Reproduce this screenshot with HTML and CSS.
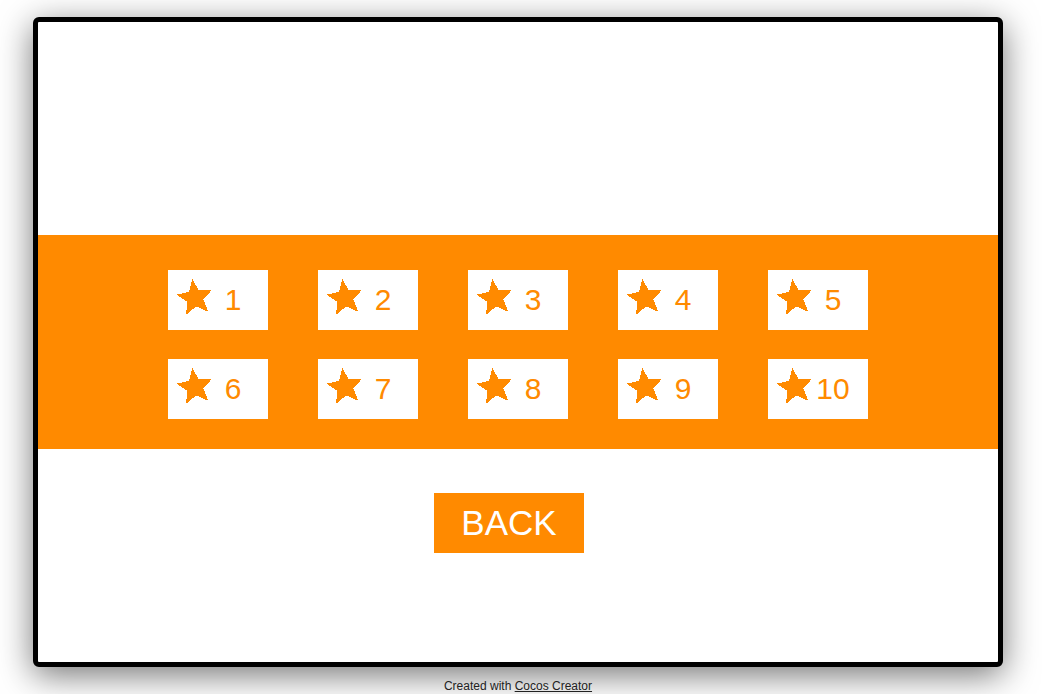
FILE: index.html
```html
<!DOCTYPE html>
<html>
<head>
<meta charset="utf-8">
<link rel="stylesheet" href="styles.css">
</head>
<body>
<svg width="0" height="0" class="defs">
  <defs>
    <polygon id="star" points="0,-19 5,-6.9 18.1,-5.9 8.1,2.6 11.2,15.4 0,8.5 -11.2,15.4 -8.1,2.6 -18.1,-5.9 -5,-6.9"/>
  </defs>
</svg>
<div class="page">
  <div class="frame">
    <div class="top-space"></div>
    <div class="band">
      <div class="grid">
        <div class="level"><svg class="star" viewBox="-19 -19 38 38"><use href="#star" transform="rotate(-8)"/></svg><span class="num">1</span></div>
        <div class="level"><svg class="star" viewBox="-19 -19 38 38"><use href="#star" transform="rotate(-8)"/></svg><span class="num">2</span></div>
        <div class="level"><svg class="star" viewBox="-19 -19 38 38"><use href="#star" transform="rotate(-8)"/></svg><span class="num">3</span></div>
        <div class="level"><svg class="star" viewBox="-19 -19 38 38"><use href="#star" transform="rotate(-8)"/></svg><span class="num">4</span></div>
        <div class="level"><svg class="star" viewBox="-19 -19 38 38"><use href="#star" transform="rotate(-8)"/></svg><span class="num">5</span></div>
        <div class="level"><svg class="star" viewBox="-19 -19 38 38"><use href="#star" transform="rotate(-8)"/></svg><span class="num">6</span></div>
        <div class="level"><svg class="star" viewBox="-19 -19 38 38"><use href="#star" transform="rotate(-8)"/></svg><span class="num">7</span></div>
        <div class="level"><svg class="star" viewBox="-19 -19 38 38"><use href="#star" transform="rotate(-8)"/></svg><span class="num">8</span></div>
        <div class="level"><svg class="star" viewBox="-19 -19 38 38"><use href="#star" transform="rotate(-8)"/></svg><span class="num">9</span></div>
        <div class="level"><svg class="star" viewBox="-19 -19 38 38"><use href="#star" transform="rotate(-8)"/></svg><span class="num">10</span></div>
      </div>
    </div>
    <div class="back">BACK</div>
  </div>
  <div class="footer">Created with <a href="#">Cocos Creator</a></div>
</div>
</body>
</html>
```

FILE: styles.css
```css
html, body {
  margin: 0;
  padding: 0;
  background: #ffffff;
  height: 694px;
  overflow: hidden;
}
.defs {
  position: absolute;
  width: 0;
  height: 0;
}
.page {
  padding-top: 17px;
  margin-left: 33px;
  width: 970px;
  font-family: "Liberation Sans", Arial, sans-serif;
}
.frame {
  width: 960px;
  height: 640px;
  border: 5px solid #000;
  border-radius: 6px;
  background: #fff;
  box-shadow: 0 8px 34px rgba(0, 0, 0, 0.55);
  display: flex;
  flex-direction: column;
}
.top-space {
  height: 213px;
  flex: none;
}
.band {
  height: 214px;
  flex: none;
  background: #ff8a00;
  box-sizing: border-box;
  padding-top: 35px;
  display: flex;
  justify-content: center;
}
.grid {
  display: grid;
  grid-template-columns: repeat(5, 100px);
  grid-auto-rows: 60px;
  column-gap: 50px;
  row-gap: 29px;
}
.level {
  background: #fff;
  position: relative;
  display: flex;
  align-items: center;
}
.star {
  width: 38px;
  height: 38px;
  margin-left: 8px;
  margin-top: -4px;
  fill: #ff8a00;
  flex: none;
  shape-rendering: crispEdges;
}
.num {
  flex: 1;
  text-align: center;
  margin-left: 2px;
  margin-right: 18px;
  color: #ff8a00;
  font-size: 30px;
  line-height: 30px;
}
.back {
  margin-top: 44px;
  margin-left: 396px;
  width: 150px;
  height: 60px;
  background: #ff8a00;
  color: #fff;
  font-size: 35px;
  line-height: 60px;
  text-align: center;
}
.footer {
  margin-top: 12px;
  text-align: center;
  font-size: 12px;
  line-height: 14px;
  color: #222;
}
.footer a {
  color: #222;
  text-decoration: underline;
}
```
